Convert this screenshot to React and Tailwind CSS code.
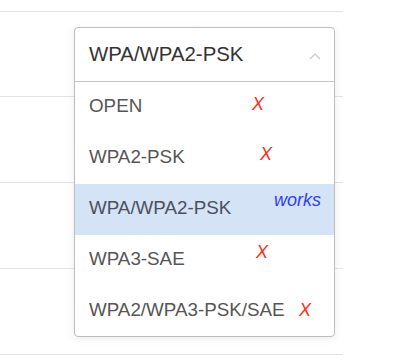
import React from "react";

const options = ["OPEN", "WPA2-PSK", "WPA/WPA2-PSK", "WPA3-SAE", "WPA2/WPA3-PSK/SAE"];

export default function App() {
  return (
    <div className="relative w-[400px] h-[364px] bg-white overflow-hidden" style={{ fontFamily: '"Liberation Sans", Arial, sans-serif' }}>
      <div className="w-[343px] pt-[11px]">
        <div className="h-[85px] border-t border-[#e3e3e3]" />
        <div className="h-[86px] border-t border-[#e3e3e3]" />
        <div className="h-[86px] border-t border-[#e3e3e3]" />
        <div className="h-[86px] border-t border-[#e3e3e3]" />
        <div className="h-[10px] border-t border-[#e3e3e3]" />
      </div>

      <div className="absolute left-[74px] top-[27px] w-[261px] h-[310px] border border-[#bdbdbd] rounded-[4px] bg-white shadow-[0_2px_8px_rgba(0,0,0,0.08)] flex flex-col overflow-hidden">
        <div className="h-[54px] shrink-0 border-b border-[#c4c4c4] flex items-center justify-between pl-[14px] pr-[13px]">
          <span className="text-[20.4px] text-[#333] leading-none">WPA/WPA2-PSK</span>
          <svg width="12" height="8" viewBox="0 0 12 8" className="mt-[2px]">
            <path d="M1 7 L6 2 L11 7" fill="none" stroke="#c8c8c8" strokeWidth="1.2" />
          </svg>
        </div>
        {options.map((o, i) => (
          <div
            key={o}
            className={
              "h-[51px] shrink-0 flex items-center pl-[14px] " +
              (i === 2 ? "bg-[#d5e3f6] text-[#4a5060]" : "text-[#555]")
            }
          >
            <span className="text-[18.8px] leading-none pb-[2px]">{o}</span>
          </div>
        ))}
      </div>

      <span className="absolute left-[252px] top-[95px] text-[18px] leading-none italic text-[#ff2d1a]">X</span>
      <span className="absolute left-[260px] top-[145px] text-[18px] leading-none italic text-[#ff2d1a]">X</span>
      <span className="absolute left-[274px] top-[191px] text-[18px] leading-none italic text-[#2b42f2]">works</span>
      <span className="absolute left-[256px] top-[243px] text-[18px] leading-none italic text-[#ff2d1a]">X</span>
      <span className="absolute left-[299px] top-[301px] text-[18px] leading-none italic text-[#ff2d1a]">X</span>
    </div>
  );
}
